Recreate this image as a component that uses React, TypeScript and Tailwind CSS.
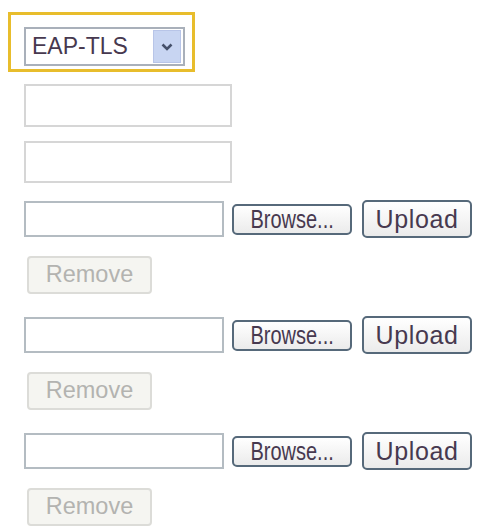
import React from "react";

const font = { fontFamily: '"Liberation Sans", Arial, sans-serif' };

function FileGroup() {
  return (
    <div className="flex flex-col">
      <div className="flex items-center h-[38px]">
        <div className="w-[200px] h-[36px] border-2 border-[#b4bcc2] bg-white" />
        <button className="ml-[8px] w-[120px] h-[31px] rounded-[5px] border-2 border-[#56697a] bg-gradient-to-b from-white to-[#ebebeb] text-[#47394f] leading-none flex items-center justify-center overflow-hidden">
          <span className="inline-block text-[25px] scale-x-[0.8] whitespace-nowrap">Browse...</span>
        </button>
        <button className="ml-[10px] w-[110px] h-[38px] rounded-[5px] border-2 border-[#56697a] bg-gradient-to-b from-white to-[#ebebeb] text-[25px] text-[#47394f] tracking-[0.6px] leading-none">
          Upload
        </button>
      </div>
      <button className="mt-[18px] ml-[3px] w-[125px] h-[38px] rounded-[4px] border-2 border-[#dcdcd8] bg-[#f5f5f1] text-[23.5px] text-[#b3b3b0] leading-none">
        Remove
      </button>
    </div>
  );
}

export default function App() {
  return (
    <div className="w-[479px] h-[529px] bg-white overflow-hidden" style={font}>
      <div className="ml-[8px] mt-[12px] w-[187px] h-[60px] border-[3px] border-[#e8bd2c] pt-[12px] pl-[13px]">
        <div className="w-[161px] h-[39px] border-2 border-[#a9b0ba] bg-white flex items-center justify-between pl-[6px] pr-[2px]">
          <span className="text-[23px] text-[#47394f] leading-none">EAP-TLS</span>
          <div className="w-[28px] h-[33px] bg-[#c8d5f2] border border-[#b8c5e8] flex items-center justify-center">
            <svg width="14" height="10" viewBox="0 0 14 10">
              <path d="M2.5 2.5 L7 7 L11.5 2.5" fill="none" stroke="#45506a" strokeWidth="2.6" />
            </svg>
          </div>
        </div>
      </div>
      <div className="ml-[24px] mt-[12px] flex flex-col">
        <div className="w-[208px] h-[43px] border-2 border-[#d6d6d6] bg-white" />
        <div className="mt-[14px] w-[208px] h-[42px] border-2 border-[#d6d6d6] bg-white" />
        <div className="mt-[17px] flex flex-col gap-[22px]">
          <FileGroup />
          <FileGroup />
          <FileGroup />
        </div>
      </div>
    </div>
  );
}
